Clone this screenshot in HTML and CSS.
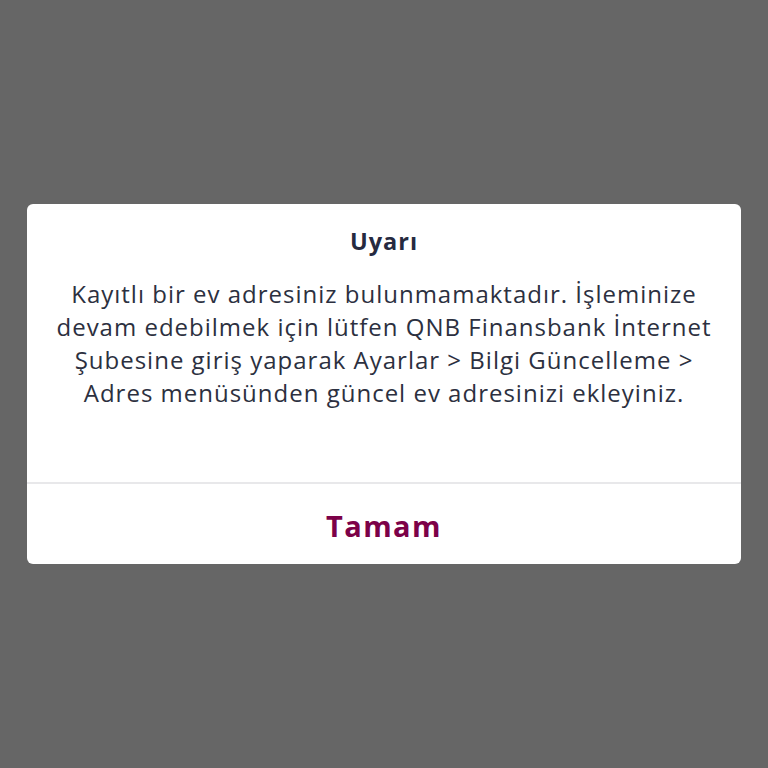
FILE: index.html
```html
<!DOCTYPE html>
<html lang="tr">
<head>
<meta charset="utf-8">
<link rel="stylesheet" href="styles.css">
</head>
<body>
<div class="screen">
  <div class="dialog">
    <div class="content">
      <div class="title">Uyarı</div>
      <p class="message">Kayıtlı bir ev adresiniz bulunmamaktadır. İşleminize<br>devam edebilmek için lütfen QNB Finansbank İnternet<br>Şubesine giriş yaparak Ayarlar &gt; Bilgi Güncelleme &gt;<br>Adres menüsünden güncel ev adresinizi ekleyiniz.</p>
    </div>
    <div class="actions">
      <button class="btn">Tamam</button>
    </div>
  </div>
</div>
</body>
</html>
```

FILE: styles.css
```css
html, body {
  margin: 0;
  padding: 0;
  background: #666666;
}
.screen {
  width: 768px;
  height: 768px;
  display: flex;
  align-items: center;
  justify-content: center;
  font-family: "Open Sans", Lato, sans-serif;
}
.dialog {
  width: 714px;
  height: 360px;
  background: #ffffff;
  border-radius: 6px;
  display: flex;
  flex-direction: column;
  overflow: hidden;
}
.content {
  height: 280px;
  padding: 20px 10px 0;
  box-sizing: border-box;
  border-bottom: 2px solid #e8e8ea;
  text-align: center;
}
.title {
  font-size: 23.5px;
  font-weight: 700;
  letter-spacing: 1px;
  color: #262a40;
  line-height: 34px;
}
.message {
  margin: 19px 0 0;
  font-size: 24px;
  letter-spacing: 1px;
  line-height: 33px;
  color: #2c3040;
  white-space: nowrap;
}
.actions {
  flex: 1;
  display: flex;
  align-items: center;
  justify-content: center;
}
.btn {
  border: 0;
  background: none;
  font-family: "Open Sans", sans-serif;
  font-size: 29px;
  font-weight: 700;
  letter-spacing: 1.4px;
  color: #7c0148;
  padding: 0;
  margin-top: 2px;
}
```
